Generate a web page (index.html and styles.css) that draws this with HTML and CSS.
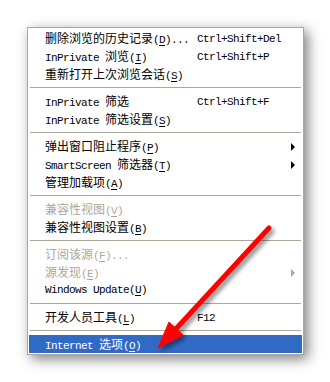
FILE: index.html
```html
<!DOCTYPE html>
<html lang="zh-CN">
<head>
	<meta charset="UTF-8">
	<title>工具菜单</title>
	<link rel="stylesheet" href="styles.css">
</head>
<body>
<div class="page">
	<div class="menu">
		<div class="item"><span>删除浏览的历史记录<span class="en">(<u>D</u>)...</span></span><span class="en key">Ctrl+Shift+Del</span></div>
		<div class="item"><span><span class="en">InPrivate </span>浏览<span class="en">(<u>I</u>)</span></span><span class="en key">Ctrl+Shift+P</span></div>
		<div class="item"><span>重新打开上次浏览会话<span class="en">(<u>S</u>)</span></span></div>
		<div class="sep"></div>
		<div class="item"><span><span class="en">InPrivate </span>筛选</span><span class="en key">Ctrl+Shift+F</span></div>
		<div class="item"><span><span class="en">InPrivate </span>筛选设置<span class="en">(<u>S</u>)</span></span></div>
		<div class="sep"></div>
		<div class="item"><span>弹出窗口阻止程序<span class="en">(<u>P</u>)</span></span><span></span><i class="arrow"></i></div>
		<div class="item"><span><span class="en">SmartScreen </span>筛选器<span class="en">(<u>T</u>)</span></span><span></span><i class="arrow"></i></div>
		<div class="item"><span>管理加载项<span class="en">(<u>A</u>)</span></span></div>
		<div class="sep"></div>
		<div class="item off"><span>兼容性视图<span class="en">(<u>V</u>)</span></span></div>
		<div class="item"><span>兼容性视图设置<span class="en">(<u>B</u>)</span></span></div>
		<div class="sep"></div>
		<div class="item off"><span>订阅该源<span class="en">(<u>F</u>)...</span></span></div>
		<div class="item off"><span>源发现<span class="en">(<u>E</u>)</span></span><span></span><i class="arrow"></i></div>
		<div class="item"><span class="en">Windows Update(<u>U</u>)</span></div>
		<div class="sep"></div>
		<div class="item"><span>开发人员工具<span class="en">(<u>L</u>)</span></span><span class="en key">F12</span></div>
		<div class="sep"></div>
		<div class="item active"><span><span class="en">Internet </span>选项<span class="en">(<u>O</u>)</span></span></div>
	</div>
	<svg class="pointer" width="330" height="382" viewBox="0 0 330 382">
		<defs>
			<filter id="shade" x="-20%" y="-20%" width="140%" height="140%">
				<feDropShadow dx="3" dy="3" stdDeviation="2" flood-color="#000" flood-opacity="0.45"/>
			</filter>
		</defs>
		<g filter="url(#shade)" fill="#ff0000" stroke="#ff0000">
			<line x1="269" y1="228" x2="174" y2="331" stroke-width="5" stroke-linecap="round"/>
			<polygon points="158,348 169,322 183,335" stroke-width="1" stroke-linejoin="round"/>
		</g>
	</svg>
</div>
</body>
</html>
```

FILE: styles.css
```css
body{
	margin: 0;
	background: #fff;
}
.page{
	position: relative;
	width: 330px;
	height: 382px;
	padding: 27px 0 0 27px;
	box-sizing: border-box;
}
.menu{
	width: 273px;
	padding: 1px;
	border: 1px solid #aca899;
	background: #fff;
	box-shadow: 4px 4px 12px rgba(0,0,0,.5);
	font-family: "Noto Sans CJK SC", sans-serif;
	font-size: 12px;
	color: #000;
}
.item{
	display: grid;
	grid-template-columns: 152px 1fr 16px;
	align-items: center;
	height: 18px;
	line-height: 18px;
	padding-left: 16px;
	white-space: nowrap;
}
.en{
	font-family: "Liberation Mono", monospace;
	font-size: 11px;
	letter-spacing: -0.6px;
}
.item u{
	text-decoration: underline;
	text-underline-offset: 2px;
}
.off{
	color: #aca899;
}
.active{
	background: #316ac5;
	color: #fff;
}
.arrow{
	width: 0;
	height: 0;
	margin-left: 5px;
	border-top: 4px solid transparent;
	border-bottom: 4px solid transparent;
	border-left: 4px solid #000;
}
.off .arrow{
	border-left-color: #aca899;
}
.sep{
	height: 1px;
	margin: 4px 1px 4px 1px;
	background: #aca899;
}
.pointer{
	position: absolute;
	left: 0;
	top: 0;
}
```
